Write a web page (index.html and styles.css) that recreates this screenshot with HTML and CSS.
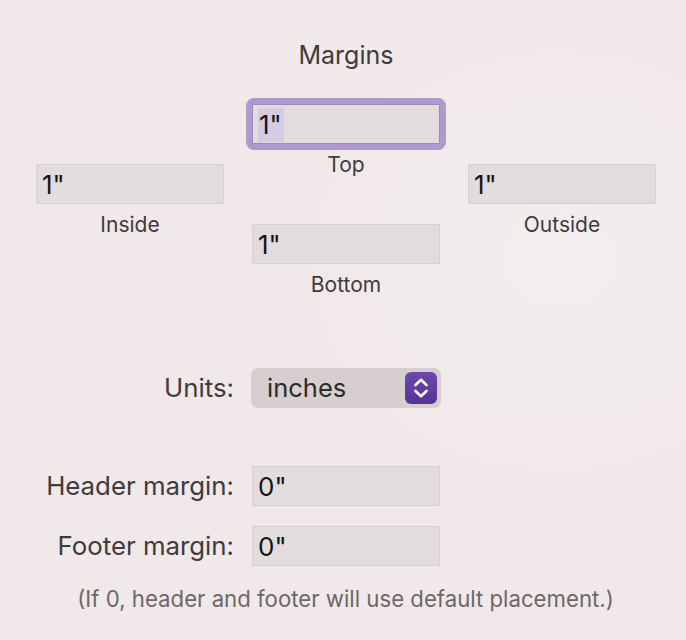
FILE: index.html
```html
<!DOCTYPE html>
<html lang="en">
<head>
<meta charset="utf-8">
<title>Margins</title>
<link rel="stylesheet" href="styles.css">
</head>
<body>
<div class="panel">
  <h1 class="title">Margins</h1>
  <div class="margins">
    <div class="col side">
      <div class="unit">
        <div class="field">1"</div>
        <div class="caption">Inside</div>
      </div>
    </div>
    <div class="col middle">
      <div class="unit">
        <div class="field focused"><span class="sel">1"</span></div>
        <div class="caption">Top</div>
      </div>
      <div class="unit bottom">
        <div class="field">1"</div>
        <div class="caption">Bottom</div>
      </div>
    </div>
    <div class="col side">
      <div class="unit">
        <div class="field">1"</div>
        <div class="caption">Outside</div>
      </div>
    </div>
  </div>

  <div class="form">
    <div class="row units-row">
      <div class="label">Units:</div>
      <div class="popup">
        <span class="popup-text">inches</span>
        <span class="stepper">
          <svg width="32" height="32" viewBox="0 0 32 32" aria-hidden="true">
            <path d="M10.5 13 L16 7.8 L21.5 13" fill="none" stroke="#fff" stroke-width="2.6" stroke-linecap="round" stroke-linejoin="round"/>
            <path d="M10.5 19 L16 24.2 L21.5 19" fill="none" stroke="#fff" stroke-width="2.6" stroke-linecap="round" stroke-linejoin="round"/>
          </svg>
        </span>
      </div>
    </div>
    <div class="row header-row">
      <div class="label">Header margin:</div>
      <div class="field">0"</div>
    </div>
    <div class="row footer-row">
      <div class="label">Footer margin:</div>
      <div class="field">0"</div>
    </div>
  </div>

  <p class="note">(If 0, header and footer will use default placement.)</p>
</div>
</body>
</html>
```

FILE: styles.css
```css
html, body {
  margin: 0;
  padding: 0;
}

body {
  width: 686px;
  height: 640px;
  overflow: hidden;
  background: radial-gradient(ellipse 260px 220px at 560px 260px, #f4eeef 0%, #f0e8e9 100%), #f0e8e9;
  font-family: Inter, "Noto Sans", "Liberation Sans", sans-serif;
  color: #3f3b3c;
}

.panel {
  padding-top: 39px;
}

.title {
  margin: 0;
  font-size: 25px;
  font-weight: 400;
  line-height: 32px;
  text-align: center;
  padding-left: 6px;
  color: #3f3b3c;
}

.margins {
  display: grid;
  grid-template-columns: 188px 188px 188px;
  column-gap: 28px;
  padding-left: 36px;
  margin-top: 33px;
}

.col.side {
  padding-top: 60px;
}

.unit.bottom {
  margin-top: 40px;
}

.field {
  box-sizing: border-box;
  width: 188px;
  height: 40px;
  background: #e3dcdc;
  border: 1px solid #d6cecf;
  padding-left: 5px;
  font-size: 26px;
  line-height: 40px;
  color: #151414;
}

.field.focused {
  position: relative;
  border-color: #9d88bd;
}

.field.focused::before {
  content: "";
  position: absolute;
  inset: -7px;
  border: 6px solid #ae9bcb;
  border-radius: 8px;
}

.sel {
  display: inline-block;
  background: #d4cce7;
  line-height: 34px;
  padding: 0 2px 0 1px;
  margin-top: 3px;
  vertical-align: top;
}

.caption {
  height: 40px;
  line-height: 42px;
  font-size: 21px;
  text-align: center;
}

.form {
  margin-top: 64px;
  display: flex;
  flex-direction: column;
}

.row {
  display: grid;
  grid-template-columns: 234px 190px;
  column-gap: 17px;
  align-items: center;
}

.label {
  text-align: right;
  font-size: 25.8px;
  line-height: 40px;
}

.popup {
  box-sizing: border-box;
  width: 190px;
  height: 40px;
  border-radius: 7px;
  background: #d6cecf;
  display: flex;
  align-items: center;
  justify-content: space-between;
  padding: 0 4px 0 16px;
}

.popup-text {
  font-size: 25.5px;
  line-height: 36px;
  color: #2d2a2b;
}

.stepper {
  width: 32px;
  height: 32px;
  border-radius: 6px;
  background: linear-gradient(#6b4aa9, #553392);
  display: block;
}

.stepper svg {
  display: block;
}

.header-row {
  margin-top: 58px;
}

.header-row .field,
.footer-row .field {
  margin-left: 1px;
}

.footer-row {
  margin-top: 20px;
}

.note {
  margin: 17px 0 0;
  text-align: center;
  padding-left: 5px;
  font-size: 22.2px;
  line-height: 32px;
  color: #6e6768;
}
```
